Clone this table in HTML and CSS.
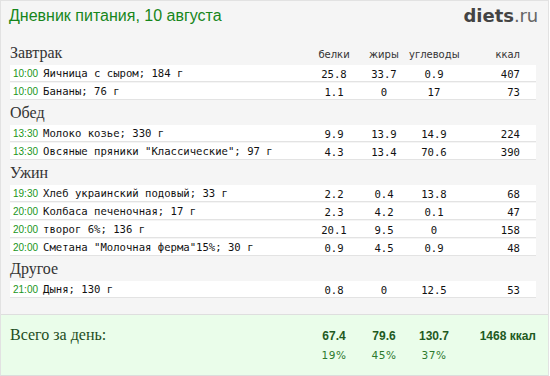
FILE: index.html
```html
<!DOCTYPE html>
<html lang="ru">
<head>
<meta charset="utf-8">
<link rel="stylesheet" href="styles.css">
</head>
<body>
<div class="widget">
  <div class="top">
    <div class="title">Дневник питания, 10 августа</div>
    <div class="logo"><b>diets</b>.ru</div>
  </div>
  <div class="diary">
    <div class="sec-head">
      <div class="sec-name">Завтрак</div>
      <div class="col">белки</div>
      <div class="col">жиры</div>
      <div class="col">углеводы</div>
      <div class="col kcal">ккал</div>
    </div>
    <div class="row"><div class="food"><span class="time">10:00</span>Яичница с сыром; 184 г</div><div class="num">25.8</div><div class="num">33.7</div><div class="num">0.9</div><div class="num kcal">407</div></div>
    <div class="row"><div class="food"><span class="time">10:00</span>Бананы; 76 г</div><div class="num">1.1</div><div class="num">0</div><div class="num">17</div><div class="num kcal">73</div></div>

    <div class="sec-head"><div class="sec-name">Обед</div></div>
    <div class="row"><div class="food"><span class="time">13:30</span>Молоко козье; 330 г</div><div class="num">9.9</div><div class="num">13.9</div><div class="num">14.9</div><div class="num kcal">224</div></div>
    <div class="row"><div class="food"><span class="time">13:30</span>Овсяные пряники "Классические"; 97 г</div><div class="num">4.3</div><div class="num">13.4</div><div class="num">70.6</div><div class="num kcal">390</div></div>

    <div class="sec-head"><div class="sec-name">Ужин</div></div>
    <div class="row"><div class="food"><span class="time">19:30</span>Хлеб украинский подовый; 33 г</div><div class="num">2.2</div><div class="num">0.4</div><div class="num">13.8</div><div class="num kcal">68</div></div>
    <div class="row"><div class="food"><span class="time">20:00</span>Колбаса печеночная; 17 г</div><div class="num">2.3</div><div class="num">4.2</div><div class="num">0.1</div><div class="num kcal">47</div></div>
    <div class="row"><div class="food"><span class="time">20:00</span>творог 6%; 136 г</div><div class="num">20.1</div><div class="num">9.5</div><div class="num">0</div><div class="num kcal">158</div></div>
    <div class="row"><div class="food"><span class="time">20:00</span>Сметана "Молочная ферма"15%; 30 г</div><div class="num">0.9</div><div class="num">4.5</div><div class="num">0.9</div><div class="num kcal">48</div></div>

    <div class="sec-head"><div class="sec-name">Другое</div></div>
    <div class="row"><div class="food"><span class="time">21:00</span>Дыня; 130 г</div><div class="num">0.8</div><div class="num">0</div><div class="num">12.5</div><div class="num kcal">53</div></div>
  </div>
  <div class="totals">
    <div class="total-name">Всего за день:</div>
    <div class="tot">67.4</div>
    <div class="tot">79.6</div>
    <div class="tot">130.7</div>
    <div class="tot tot-kcal">1468 ккал</div>
    <div></div>
    <div class="pct">19%</div>
    <div class="pct">45%</div>
    <div class="pct">37%</div>
    <div></div>
  </div>
</div>
</body>
</html>
```
FILE: styles.css
```css
* { box-sizing: border-box; }
html, body { margin: 0; padding: 0; background: #ffffff; }

.widget {
  width: 549px;
  height: 376px;
  border: 1px solid #e2e2e2;
  border-bottom-color: #dcdcdc;
  background: #f5f5f5;
  display: flex;
  flex-direction: column;
}

.top {
  height: 40px;
  display: flex;
  justify-content: space-between;
  align-items: flex-start;
  padding: 4px 10px 0 8px;
}
.title {
  font-family: "Liberation Sans", Arial, sans-serif;
  font-size: 16px;
  line-height: 22px;
  color: #17861b;
}
.logo {
  font-family: "DejaVu Sans", sans-serif;
  font-size: 18px;
  line-height: 21px;
  color: #666;
  letter-spacing: -0.2px;
}
.logo b { color: #444; font-weight: bold; letter-spacing: 0; }

.diary {
  padding: 0 12px 0 9px;
}
.sec-head, .row, .totals {
  display: grid;
  grid-template-columns: 299px 50px 50px 50px 77px;
}
.sec-head {
  height: 24px;
  align-items: end;
  padding-bottom: 3px;
}
.sec-name {
  font-family: "Liberation Serif", Georgia, serif;
  font-size: 16px;
  line-height: 18px;
  color: #333;
}
.col {
  font-family: "DejaVu Sans", Verdana, sans-serif;
  font-size: 10px;
  line-height: 14px;
  text-align: center;
  color: #333;
}
.kcal { text-align: right; padding-right: 16px; }

.row {
  height: 17px;
  margin-bottom: 1px;
  background: #fff;
  border-bottom: 1px solid #e3e3e3;
  align-items: center;
  font-family: "DejaVu Sans Mono", monospace;
  font-size: 10.6px;
  line-height: 16px;
  color: #111;
}
.food { white-space: nowrap; padding-left: 3px; }
.time {
  font-family: "Liberation Sans", Arial, sans-serif;
  font-size: 10px;
  color: #1a961a;
  margin-right: 5px;
}
.num { text-align: center; }
.num.kcal { text-align: right; }

.totals {
  margin-top: auto;
  height: 61px;
  border-top: 1px solid #dedede;
  background: #eafdea;
  padding: 10px 12px 0 9px;
  grid-template-rows: 20px 20px;
  align-content: start;
}
.total-name {
  font-family: "Liberation Serif", Georgia, serif;
  font-size: 16px;
  line-height: 20px;
  color: #1d4d1d;
}
.tot {
  font-family: "Liberation Sans", Arial, sans-serif;
  font-weight: bold;
  font-size: 12px;
  line-height: 22px;
  text-align: center;
  color: #1f5a1f;
}
.tot-kcal { text-align: right; }
.pct {
  font-family: "DejaVu Sans", Verdana, sans-serif;
  font-size: 10.5px;
  line-height: 20px;
  text-align: center;
  color: #2d7a2d;
  letter-spacing: 0.5px;
}
```
